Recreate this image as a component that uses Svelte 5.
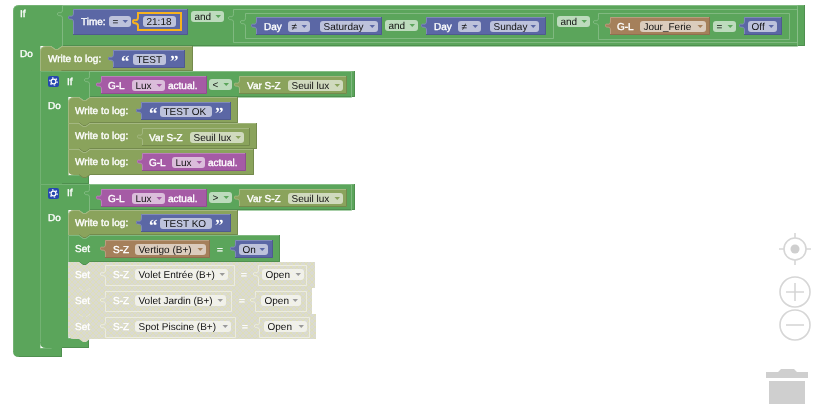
<script>
	// Blockly workspace: every block sits at its own place on the canvas
	function valueD(b) {
		const { x, y, w, h } = b;
		return {
			fill: `M${x},${y} H${x + w} V${y + h} H${x} V${y + 13} c0,-5 -5,-1 -5,-4.5 s5,1.5 5,-4.5 Z`,
			light: `M${x + 0.5},${y + h} V${y + 13} c0,-5 -5,-1 -5,-4.5 s5,1.5 5,-4.5 V${y + 0.5} H${x + w}`,
			dark: `M${x + w - 0.5},${y} V${y + h - 0.5} H${x}`
		};
	}

	function stmtD(b) {
		const { x, y, w, h, top, bottom } = b;
		const r = 6;
		const head = top
			? `M${x},${y + r} Q${x},${y} ${x + r},${y}`
			: `M${x},${y}`;
		const notch = `H${x + 11} l4,3 h3 l4,-3 H${x + w}`;
		const tail = `H${x + 22} l-4,3 h-3 l-4,-3`;
		const foot = bottom
			? `H${x + r} Q${x},${y + h} ${x},${y + h - r}`
			: `H${x}`;
		return {
			fill: `${head} ${notch} V${y + h} ${tail} ${foot} Z`,
			light: `M${x + 0.5},${y + h} V${y + r} ${top ? `Q${x + 0.5},${y + 0.5} ${x + r},${y + 0.5}` : `V${y + 0.5}`} H${x + 11} l4,3 h3 l4,-3 H${x + w}`,
			dark: `M${x + w - 0.5},${y} V${y + h - 0.5} ${tail}`
		};
	}

	// C-shaped block: header row, Do column, closing cap
	function ifD(b) {
		const { x, y, w, h, doX, capY, capW, capH, top, bottom: roundFoot, flat } = b;
		const r = 6;
		const end = x + capW;
		const bottom = capY + capH;
		const head = top ? `M${x + r},${y}` : `M${x},${y}`;
		const tail = flat ? '' : `H${x + 22} l-4,3 h-3 l-4,-3`;
		const foot = roundFoot ? `H${x + r} Q${x},${bottom} ${x},${bottom - r}` : `H${x}`;
		const close = top ? `V${y + r} Q${x},${y} ${x + r},${y}` : '';
		return {
			fill: `${head} H${x + w} V${y + h} H${doX + 22} l-4,3 h-3 l-4,-3 H${doX} V${capY} H${end} V${bottom} ${tail} ${foot} ${close} Z`,
			light: `M${x + 0.5},${bottom - (roundFoot ? r : 0)} V${y + (top ? r : 0.5)} ${top ? `Q${x + 0.5},${y + 0.5} ${x + r},${y + 0.5}` : ''} H${x + w} M${doX + 0.5},${y + h} V${capY} M${doX},${capY + 0.5} H${end}`,
			dark: `M${x + w - 0.5},${y} V${y + h - 0.5} H${doX + 22} M${end - 0.5},${capY} V${bottom - 0.5} ${flat ? `H${x + r}` : `H${x + 22}`}`
		};
	}

	const outline = (x, y, w, h) => valueD({ x, y, w, h }).fill;

	const ifRow = (y, op) => [
		{ kind: 'value', c: 'purple', x: 101, y: y + 5, w: 106, h: 18, labels: [[108, y + 14, 'G-L'], [168, y + 14, 'actual.']], fields: [[132, y + 9, 33, 'Lux', true]] },
		{ kind: 'value', c: 'olive', x: 239, y: y + 5, w: 108, h: 18, labels: [[247, y + 14, 'Var S-Z']], fields: [[288, y + 9, 55, 'Seuil lux', true]] },
		{ kind: 'plain', c: 'green', fields: [[209, y + 8, 23, op, true]] }
	];

	const logText = (y, w, text, fw, tx) => [
		{ kind: 'value', c: 'blue', x: 141, y: y + 5, w, h: 18, quotes: [[149, y + 22, '“'], [tx, y + 22, '”']], fields: [[160, y + 9, fw, text]] }
	];

	const disabledRow = (y, h, w, sz, szField, eq, ox, ow, fx, fw, label) => [
		{ kind: 'stmt', c: 'off', x: 68, y, w, h, labels: [[75, y + 12, 'Set']], bottom: y > 310 },
		{ kind: 'slot', c: 'off', x: 105, y: y + 3, w: sz, h: 20 },
		{ kind: 'slot', c: 'off', x: ox, y: y + 3, w: ow, h: 20 },
		{ kind: 'plain', c: 'off', labels: [[113, y + 12, 'S-Z'], [eq, y + 12, '=']], fields: [[135, y + 7, szField, label, true], [fx, y + 7, fw, 'Open', true]] }
	];

	const blocks = [
		// main If
		{ kind: 'if', c: 'green', x: 13, y: 5, w: 792, h: 41, doX: 40, capY: 348, capW: 49, capH: 9, top: true, bottom: true, flat: true, labels: [[20, 13, 'If'], [20, 53, 'Do']] },
		{ kind: 'slot', c: 'green', x: 62, y: 5, w: 735, h: 41 },
		{ kind: 'value', c: 'blue', x: 73, y: 9, w: 115, h: 26, labels: [[81, 21, 'Time:']], fields: [[109, 16, 22, '=', true]] },
		{ kind: 'selected', c: 'blue', x: 138, y: 13, w: 43, h: 17, fields: [[143, 16, 33, '21:18']] },
		{ kind: 'plain', c: 'green', fields: [[191, 11, 33, 'and', true]] },
		{ kind: 'slot', c: 'green', x: 233, y: 9, w: 564, h: 33 },
		{ kind: 'slot', c: 'green', x: 245, y: 13, w: 308, h: 25 },
		{ kind: 'value', c: 'blue', x: 256, y: 17, w: 126, h: 18, labels: [[264, 26, 'Day']], fields: [[288, 21, 22, '≠', true], [320, 21, 58, 'Saturday', true]] },
		{ kind: 'plain', c: 'green', fields: [[385, 20, 33, 'and', true]] },
		{ kind: 'value', c: 'blue', x: 426, y: 17, w: 120, h: 18, labels: [[434, 26, 'Day']], fields: [[458, 21, 23, '≠', true], [490, 21, 49, 'Sunday', true]] },
		{ kind: 'plain', c: 'green', fields: [[557, 16, 33, 'and', true]] },
		{ kind: 'slot', c: 'green', x: 598, y: 13, w: 191, h: 26 },
		{ kind: 'value', c: 'brown', x: 610, y: 17, w: 100, h: 18, labels: [[617, 26, 'G-L']], fields: [[640, 21, 66, 'Jour_Ferie', true]] },
		{ kind: 'plain', c: 'green', fields: [[713, 21, 23, '=', true]] },
		{ kind: 'value', c: 'blue', x: 744, y: 17, w: 38, h: 18, fields: [[748, 21, 29, 'Off', true]] },

		// Write to log: TEST
		{ kind: 'stmt', c: 'olive', x: 40, y: 46, w: 153, h: 25, top: true, labels: [[48, 58, 'Write to log:']] },
		{ kind: 'value', c: 'blue', x: 113, y: 50, w: 72, h: 18, quotes: [[121, 67, '“'], [170, 67, '”']], fields: [[133, 54, 33, 'TEST']] },

		// first nested If
		{ kind: 'if', c: 'green', x: 40, y: 71, w: 315, h: 26, doX: 68, capY: 175, capW: 49, capH: 9, labels: [[67, 81, 'If'], [48, 105, 'Do']], gear: [48, 76] },
		{ kind: 'slot', c: 'green', x: 89, y: 71, w: 262, h: 26 },
		...ifRow(71, '<'),
		{ kind: 'stmt', c: 'olive', x: 68, y: 97, w: 170, h: 26, top: true, labels: [[75, 110, 'Write to log:']] },
		...logText(97, 90, 'TEST OK', 52, 215),
		{ kind: 'stmt', c: 'olive', x: 68, y: 123, w: 189, h: 26, labels: [[75, 135, 'Write to log:']] },
		{ kind: 'value', c: 'olive', x: 142, y: 128, w: 108, h: 18, labels: [[149, 137, 'Var S-Z']], fields: [[190, 132, 54, 'Seuil lux', true]] },
		{ kind: 'stmt', c: 'olive', x: 68, y: 149, w: 186, h: 26, bottom: true, labels: [[75, 161, 'Write to log:']] },
		{ kind: 'value', c: 'purple', x: 142, y: 153, w: 104, h: 18, labels: [[149, 162, 'G-L'], [208, 162, 'actual.']], fields: [[172, 157, 33, 'Lux', true]] },

		// second nested If
		{ kind: 'if', c: 'green', x: 40, y: 184, w: 315, h: 26, doX: 68, capY: 338, capW: 49, capH: 10, bottom: true, labels: [[67, 192, 'If'], [48, 217, 'Do']], gear: [48, 188] },
		{ kind: 'slot', c: 'green', x: 89, y: 184, w: 262, h: 26 },
		...ifRow(184, '>'),
		{ kind: 'stmt', c: 'olive', x: 68, y: 210, w: 170, h: 25, top: true, labels: [[75, 222, 'Write to log:']] },
		...logText(209, 90, 'TEST KO', 52, 215),
		{ kind: 'stmt', c: 'green', x: 68, y: 235, w: 212, h: 27, labels: [[75, 248, 'Set']] },
		{ kind: 'value', c: 'brown', x: 105, y: 240, w: 105, h: 18, labels: [[113, 249, 'S-Z'], [217, 249, '=']], fields: [[135, 244, 71, 'Vertigo (B+)', true]] },
		{ kind: 'value', c: 'blue', x: 235, y: 240, w: 38, h: 18, fields: [[239, 244, 29, 'On', true]] },
		...disabledRow(262, 26, 247, 129, 93, 241, 258, 48, 262, 42, 'Volet Entrée (B+)'),
		...disabledRow(288, 26, 244, 126, 91, 239, 255, 51, 261, 40, 'Volet Jardin (B+)'),
		...disabledRow(314, 25, 248, 130, 96, 242, 259, 50, 264, 43, 'Spot Piscine (B+)')
	];

	const shapeOf = (b) => (b.kind === 'if' ? ifD(b) : b.kind === 'stmt' ? stmtD(b) : valueD(b));
</script>

<div class="workspace">
	<svg width="831" height="404" viewBox="0 0 831 404">
		<defs>
			<pattern id="hatch" width="6" height="6" patternUnits="userSpaceOnUse">
				<rect width="6" height="6" fill="#dadad2" />
				<path d="M0 0 L6 6 M6 0 L0 6" stroke="#dedeb8" stroke-width="1" />
			</pattern>
		</defs>

		{#each blocks as b}
			<g class={b.c}>
				{#if b.kind === 'slot'}
					<path class="slot" d={outline(b.x, b.y, b.w, b.h)} />
				{:else if b.kind !== 'plain'}
					{@const d = shapeOf(b)}
					<path class="body" d={d.fill} />
					{#if b.c !== 'off'}
						<path class={b.kind === 'if' ? 'light soft' : 'light'} d={d.light} />
						<path class="dark" d={d.dark} />
					{/if}
					{#if b.kind === 'selected'}
						<path class="selected" d={d.fill} />
					{/if}
				{/if}

				{#if b.gear}
					<rect class="gear-bg" x={b.gear[0]} y={b.gear[1]} width="11" height="11" rx="2" />
					<circle class="gear-ring" cx={b.gear[0] + 5.5} cy={b.gear[1] + 5.5} r="2.4" />
					<circle class="gear-teeth" cx={b.gear[0] + 5.5} cy={b.gear[1] + 5.5} r="3.7" />
				{/if}

				{#each b.labels ?? [] as [x, y, text]}
					<text class="label" {x} y={y + 3.5}>{text}</text>
				{/each}

				{#each b.quotes ?? [] as [x, y, text]}
					<text class="quote" {x} {y}>{text}</text>
				{/each}

				{#each b.fields ?? [] as [x, y, w, text, arrow]}
					<rect class="field" {x} {y} width={w} height="11" rx="3" />
					<text class="value" x={x + 3.5} y={y + 9}>{text}</text>
					{#if arrow}
						<path class="arrow" d={`M${x + w - 8.5},${y + 4} h5.5 l-2.75,3 Z`} />
					{/if}
				{/each}
			</g>
		{/each}

		<!-- workspace controls -->
		<g class="controls">
			<circle class="ring" cx="795" cy="249" r="11" />
			<circle class="dot" cx="795" cy="249" r="4.5" />
			<path class="ring" d="M795 233 v5 M795 260 v5 M779 249 h5 M806 249 h5" />
			<circle class="ring" cx="795" cy="292" r="15" />
			<path class="ring" d="M786 292 h18 M795 283 v18" />
			<circle class="ring" cx="795" cy="325" r="15" />
			<path class="ring" d="M786 325 h18" />
			<path class="dot" d="M766 378 v-6 h12 l3,-3 h13 l3,3 h11 v6 Z" />
			<rect class="dot" x="769" y="381" width="36" height="23" />
		</g>
	</svg>
</div>

<style>
	:global(body) {
		background: #fff;
	}

	.workspace {
		width: 831px;
		height: 404px;
		overflow: hidden;
	}

	svg {
		display: block;
		font-family: "Liberation Sans", Arial, sans-serif;
		font-size: 10px;
		text-rendering: geometricPrecision;
		filter: blur(0.3px);
	}

	.green { --fill: #5ba55b; --light: #8cc08c; --dark: #4f8f4f; --arrow: #5ba55b; }
	.olive { --fill: #8aa35c; --light: #abbd8c; --dark: #748a4d; --arrow: #8aa35c; }
	.blue { --fill: #5b67a5; --light: #8c95c0; --dark: #4f5a8f; --arrow: #5b67a5; }
	.purple { --fill: #a55ba5; --light: #c08cc0; --dark: #8f4f8f; --arrow: #a55ba5; }
	.brown { --fill: #a5805b; --light: #c0a88c; --dark: #8f6f4f; --arrow: #a5805b; }
	.off { --fill: url(#hatch); --light: #f1f1e6; --dark: #c8c8b8; --arrow: #9a9a9a; }

	.body {
		fill: var(--fill);
	}

	.light,
	.dark,
	.slot {
		fill: none;
		stroke-width: 1;
	}

	.light {
		stroke: var(--light);
		stroke-opacity: 0.75;
	}

	.light.soft {
		stroke-opacity: 0.5;
	}

	.dark {
		stroke: var(--dark);
	}

	.slot {
		stroke: var(--light);
		stroke-opacity: 0.75;
		transform: translate(0.5px, 0.5px);
	}

	.selected {
		fill: none;
		stroke: #f7b21e;
		stroke-width: 2;
	}

	.label {
		fill: #fff;
		stroke: #fff;
		stroke-width: 0.35;
	}

	.quote {
		fill: #fff;
		font-family: "Liberation Serif", serif;
		font-size: 17px;
		font-weight: bold;
	}

	.field {
		fill: #fff;
		fill-opacity: 0.6;
	}

	.value {
		fill: #111;
	}

	.arrow {
		fill: var(--arrow);
	}

	.gear-bg {
		fill: #2647b0;
	}

	.gear-ring {
		fill: none;
		stroke: #fff;
		stroke-width: 1.2;
	}

	.gear-teeth {
		fill: none;
		stroke: #fff;
		stroke-width: 1.2;
		stroke-dasharray: 1.5 2.37;
	}

	.controls .ring {
		fill: none;
		stroke: #d6d6d6;
		stroke-width: 1.6;
	}

	.controls .dot {
		fill: #cfcfcf;
	}
</style>
